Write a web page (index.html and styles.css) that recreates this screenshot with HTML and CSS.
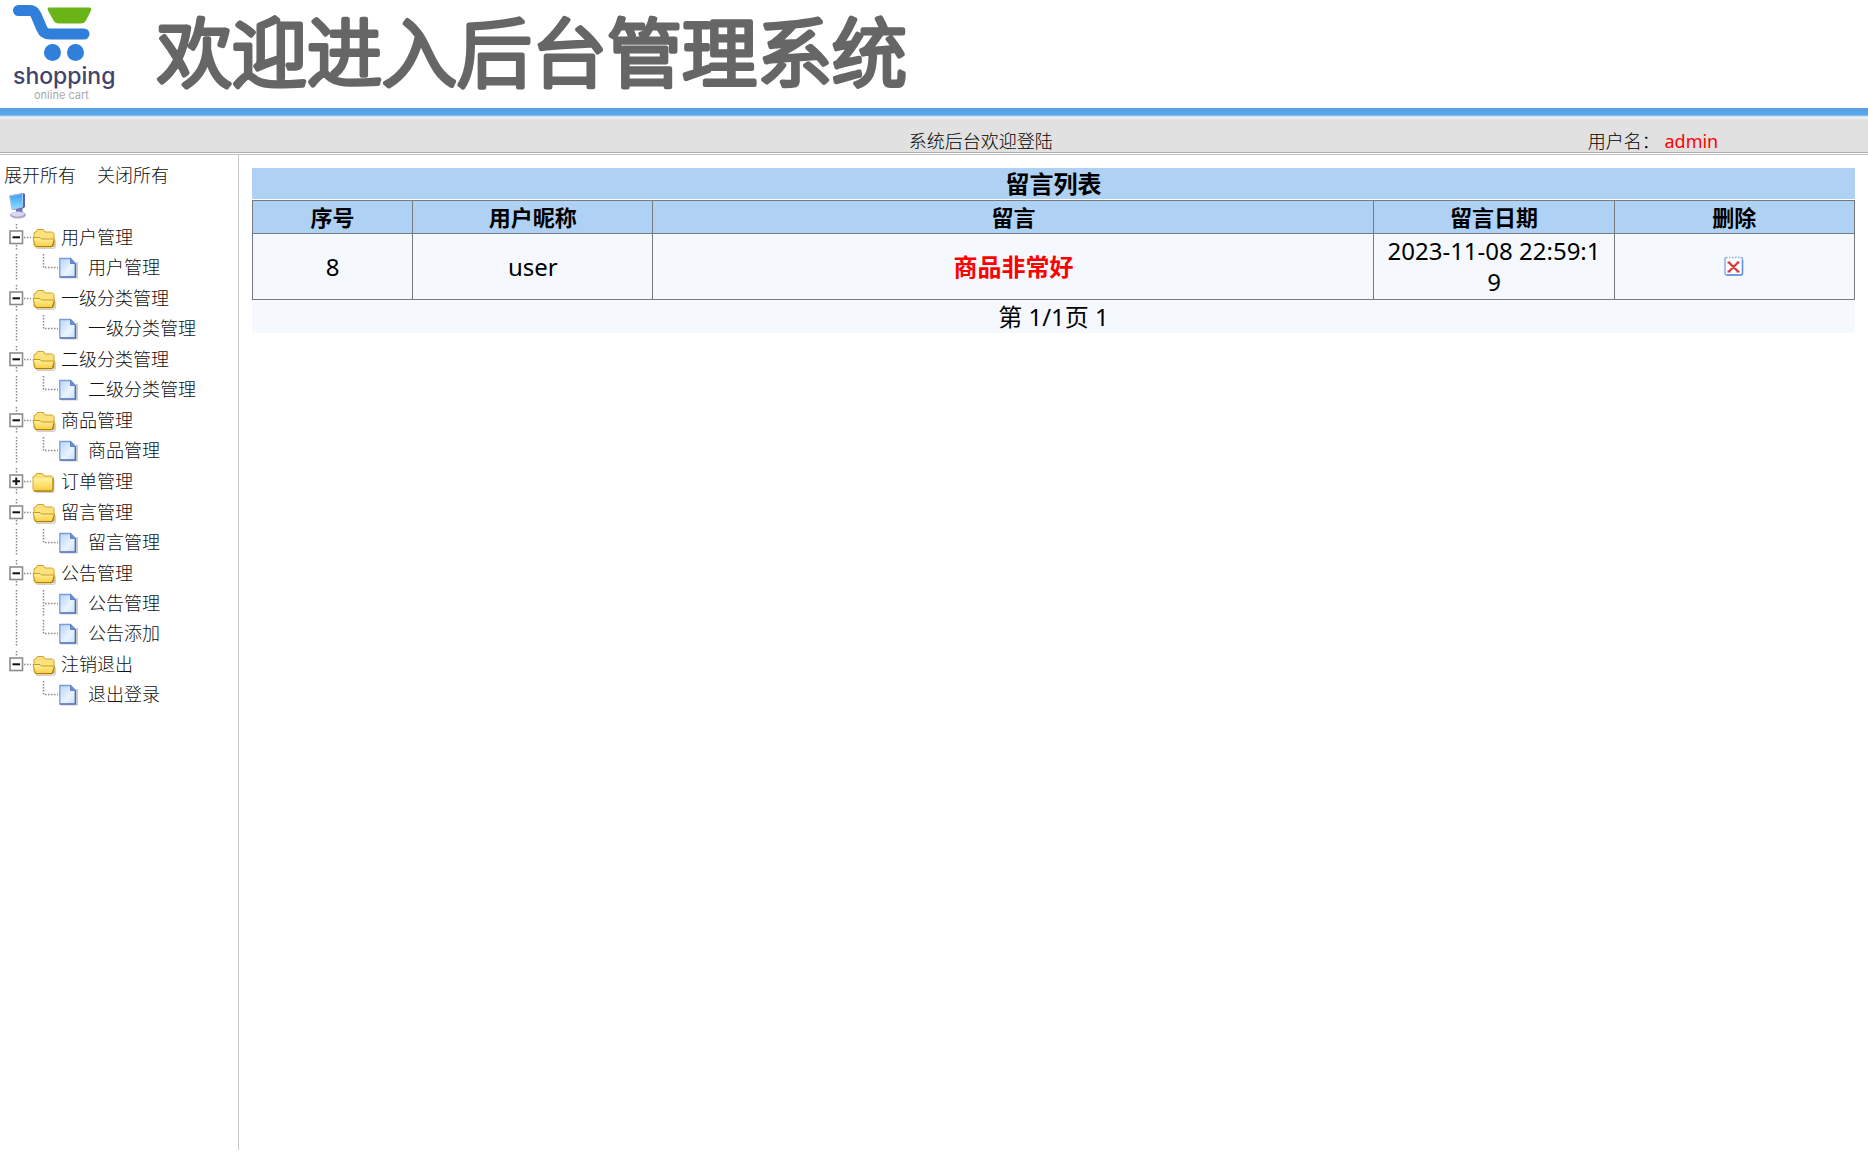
FILE: index.html
```html
<!DOCTYPE html>
<html lang="zh-CN">
<head>
<meta charset="utf-8">
<title>后台管理系统</title>
<link rel="stylesheet" href="styles.css">
</head>
<body>
<svg class="defs" aria-hidden="true">
  <defs>
    <linearGradient id="gold" x1="0" y1="0" x2="0" y2="1"><stop offset="0" stop-color="#fff3a0"/><stop offset="1" stop-color="#f8cf45"/></linearGradient>
    <linearGradient id="paper" x1="0" y1="0" x2="1" y2="1"><stop offset="0" stop-color="#b9d4fa"/><stop offset=".6" stop-color="#eaf4ff"/><stop offset="1" stop-color="#c6ddfb"/></linearGradient>
    <linearGradient id="screen" x1="0" y1="0" x2="0" y2="1"><stop offset="0" stop-color="#3a9cf0"/><stop offset="1" stop-color="#8fe0ff"/></linearGradient>
  </defs>
  <symbol id="line" viewBox="0 0 27 30"><path class="dots" d="M12.5 2v26"/></symbol>
  <symbol id="minus" viewBox="0 0 27 30"><path class="dots" d="M12.5 2v6M12.5 23v6M20 15.5h7"/><rect x="6" y="9" width="12.5" height="12.5" fill="#fff" stroke="#8c8c8c" stroke-width="1.6"/><path d="M8.500 15.300h7.500" stroke="#111" stroke-width="2"/></symbol>
  <symbol id="minus-last" viewBox="0 0 27 30"><path class="dots" d="M12.5 2v6M20 15.500h7"/><rect x="6" y="9" width="12.5" height="12.5" fill="#fff" stroke="#8c8c8c" stroke-width="1.6"/><path d="M8.500 15.300h7.500" stroke="#111" stroke-width="2"/></symbol>
  <symbol id="plus" viewBox="0 0 27 30"><path class="dots" d="M12.5 2v6M12.5 23v6M20 15.500h7"/><rect x="6" y="9" width="12.5" height="12.5" fill="#fff" stroke="#8c8c8c" stroke-width="1.6"/><path d="M8.500 15.300h7.500M12.250 11.500v7.500" stroke="#111" stroke-width="2"/></symbol>
  <symbol id="join" viewBox="0 0 27 30"><path class="dots" d="M12.5 2v26M14 15.500h13"/></symbol>
  <symbol id="join-last" viewBox="0 0 27 30"><path class="dots" d="M12.5 2v14M14 15.500h13"/></symbol>
  <symbol id="open" viewBox="0 0 27 30">
    <path d="M5 26h17l3-9v8l-2 2H6z" fill="#999" opacity=".45"/>
    <path d="M3 23V11l1-1h1l1.500-2.500h6L14 10h7.500l1.500 1.500V23l-2 2H5z" fill="#fbe27c" stroke="#d0a22c"/>
    <path d="M2 15.500h7l1.500 1.500h13l-2 7.500H4.500z" fill="url(#gold)" stroke="#c99a20" stroke-linejoin="round"/>
    <path d="M4.500 24.500h17l1.500-6" fill="none" stroke="#b07f10" stroke-width="1.200"/>
  </symbol>
  <symbol id="closed" viewBox="0 0 27 30">
    <path d="M4 25h18.500V13l1 1v12l-1 1H5z" fill="#999" opacity=".45"/>
    <path d="M2 23V11l1-1h1l1.500-2.500h6L13 10h7.500l1.500 1.500V24l-1 1H3z" fill="#fbe27c" stroke="#d0a22c"/>
    <path d="M2.500 12.500h19V24l-1 .5h-17z" fill="url(#gold)"/>
    <path d="M3 25h18l1-1.500V12" fill="none" stroke="#b8850d" stroke-width="1.300"/>
  </symbol>
  <symbol id="page" viewBox="0 0 27 30">
    <path d="M3 25.500h16V10" fill="none" stroke="#999" stroke-width="2" opacity=".5"/>
    <path d="M1.800 6.500h10.700l5 5V25H1.800z" fill="url(#paper)" stroke="#7a9ddb" stroke-width="1.300"/>
    <path d="M17.300 12v13H2" fill="none" stroke="#4c66ae" stroke-width="1.200"/>
    <path d="M12.500 6.500v5h5z" fill="#6f90d6" stroke="#5f80cb"/>
  </symbol>
</svg>

<header class="banner">
  <svg class="logo" viewBox="0 0 120 108" role="img" aria-label="shopping online cart">
    <path d="M18.500 10.500H30Q34 10.500 36 15l6 14q2 5 8 5h34" fill="none" stroke="#2f7fdb" stroke-width="11" stroke-linecap="round" stroke-linejoin="round"/>
    <path d="M49 7.500h40q3 0 2 3l-5 10q-1.500 3-5 3H59q-4 0-5.500-3l-5.500-10q-1-3 1-3z" fill="#6ab417"/>
    <circle cx="52.500" cy="52.500" r="8.500" fill="#2f7fdb"/><circle cx="75.500" cy="52.500" r="8.500" fill="#2f7fdb"/>
    <text class="logo-name" x="13" y="84">shopping</text>
    <text class="logo-sub" x="34" y="99">online cart</text>
  </svg>
  <h1 class="site-title"><svg viewBox="0 0 760 108"><text x="1" y="81">欢迎进入后台管理系统</text></svg></h1>
</header>

<div class="status">
  <span class="welcome">系统后台欢迎登陆</span>
  <span class="user">用户名： <span class="user-name">admin</span></span>
</div>

<div class="layout">
  <nav class="sidebar">
    <div class="actions"><a href="#">展开所有</a><a href="#">关闭所有</a></div>
    <svg class="computer" viewBox="0 0 27 30" aria-hidden="true">
      <ellipse cx="14" cy="24" rx="8" ry="3.500" fill="#a9a9c9"/>
      <path d="M12 17l6-1 1 7-7 1z" fill="#7476b0"/>
      <ellipse cx="13.500" cy="23" rx="6.500" ry="2.500" fill="#d9d9ee"/>
      <path d="M6 4.500L19 2l2 1v13l-2 1.500L8 19z" fill="#5066b5"/>
      <path d="M5.500 5L18.500 2.500v13.500L8 18.500z" fill="url(#screen)" stroke="#a9c4ea"/>
    </svg>
    <ul class="tree">
      <li><a class="row folder" href="#"><svg><use href="#minus"/></svg><svg><use href="#open"/></svg><span>用户管理</span></a>
        <ul><li><a class="row" href="#"><svg><use href="#line"/></svg><svg><use href="#join-last"/></svg><svg><use href="#page"/></svg><span>用户管理</span></a></li></ul></li>
      <li><a class="row folder" href="#"><svg><use href="#minus"/></svg><svg><use href="#open"/></svg><span>一级分类管理</span></a>
        <ul><li><a class="row" href="#"><svg><use href="#line"/></svg><svg><use href="#join-last"/></svg><svg><use href="#page"/></svg><span>一级分类管理</span></a></li></ul></li>
      <li><a class="row folder" href="#"><svg><use href="#minus"/></svg><svg><use href="#open"/></svg><span>二级分类管理</span></a>
        <ul><li><a class="row" href="#"><svg><use href="#line"/></svg><svg><use href="#join-last"/></svg><svg><use href="#page"/></svg><span>二级分类管理</span></a></li></ul></li>
      <li><a class="row folder" href="#"><svg><use href="#minus"/></svg><svg><use href="#open"/></svg><span>商品管理</span></a>
        <ul><li><a class="row" href="#"><svg><use href="#line"/></svg><svg><use href="#join-last"/></svg><svg><use href="#page"/></svg><span>商品管理</span></a></li></ul></li>
      <li><a class="row folder" href="#"><svg><use href="#plus"/></svg><svg><use href="#closed"/></svg><span>订单管理</span></a></li>
      <li><a class="row folder" href="#"><svg><use href="#minus"/></svg><svg><use href="#open"/></svg><span>留言管理</span></a>
        <ul><li><a class="row" href="#"><svg><use href="#line"/></svg><svg><use href="#join-last"/></svg><svg><use href="#page"/></svg><span>留言管理</span></a></li></ul></li>
      <li><a class="row folder" href="#"><svg><use href="#minus"/></svg><svg><use href="#open"/></svg><span>公告管理</span></a>
        <ul>
          <li><a class="row" href="#"><svg><use href="#line"/></svg><svg><use href="#join"/></svg><svg><use href="#page"/></svg><span>公告管理</span></a></li>
          <li><a class="row" href="#"><svg><use href="#line"/></svg><svg><use href="#join-last"/></svg><svg><use href="#page"/></svg><span>公告添加</span></a></li>
        </ul></li>
      <li><a class="row folder" href="#"><svg><use href="#minus-last"/></svg><svg><use href="#open"/></svg><span>注销退出</span></a>
        <ul><li><a class="row" href="#"><svg></svg><svg><use href="#join-last"/></svg><svg><use href="#page"/></svg><span>退出登录</span></a></li></ul></li>
    </ul>
  </nav>

  <main class="content">
    <h2 class="panel-title">留言列表</h2>
    <table class="messages">
      <colgroup><col class="c-id"><col class="c-mid"><col class="c-text"><col class="c-mid"><col class="c-mid"></colgroup>
      <thead>
        <tr><th>序号</th><th>用户昵称</th><th>留言</th><th>留言日期</th><th>删除</th></tr>
      </thead>
      <tbody>
        <tr>
          <td>8</td>
          <td>user</td>
          <td class="message">商品非常好</td>
          <td>2023-11-08 22:59:19</td>
          <td><button class="delete" type="button" aria-label="删除"><svg viewBox="0 0 20 20"><rect x="1" y="1.500" width="17.500" height="17.500" rx="1.500" fill="#fff" stroke="#8db0ea" stroke-width="1.500"/><path d="M2.500 19h14.500l1.500-1.500V4" fill="none" stroke="#5f8fe0" stroke-width="1.300"/><path d="M3.500 1.500h13" stroke="#fff" stroke-width="2.500" stroke-dasharray="1.500 1.500"/><path d="M3.500 6.500h3M12.500 6.500h3M3.500 15.500h3M12.500 15.500h3M5 6.500l9 9M14 6.500l-9 9" fill="none" stroke="#dc3535" stroke-width="2.200"/></svg></button></td>
        </tr>
      </tbody>
    </table>
    <div class="pager">第 1/1页 1</div>
  </main>
</div>
</body>
</html>
```
FILE: styles.css
```css
* { box-sizing: border-box; }

body {
  margin: 0;
  background: #fff;
  color: #000;
  font: 18px/24px "Noto Sans", "Noto Sans CJK SC", sans-serif;
}

a { color: #111; text-decoration: none; }
ul { margin: 0; padding: 0; list-style: none; }
.defs { position: absolute; width: 0; height: 0; }
.dots { fill: none; stroke: #8a8a8a; stroke-width: 1.5; stroke-dasharray: 1.5 1.5; }

.banner { display: flex; align-items: flex-start; height: 108px; }
.logo { flex: none; width: 120px; height: 108px; }
.logo-name { font: 500 23px Inter, sans-serif; fill: #42456b; }
.logo-sub { font: 11px Inter, sans-serif; fill: #a9a9ad; }

.site-title { margin: 0 0 0 36px; }
.site-title svg { display: block; width: 760px; height: 108px; overflow: visible; }
.site-title text {
  font: 300 75px "Noto Sans CJK SC", sans-serif;
  fill: #666;
  stroke: #666;
  stroke-width: 5px;
  stroke-linejoin: round;
}

.status {
  display: grid;
  grid-template-columns: 20% 65% 1fr;
  height: 47px;
  padding-top: 21px;
  border-bottom: 1px solid #c4c4c4;
  background: linear-gradient(#5a9fdc, #57a8ee 7px, #a9d3f5 8px, #f1f1f1 9px, #e9e9e9 11px, #e1e1e1 12px, #e1e1e1 44px, #b0b0b0 44px, #b0b0b0 45px, #fff 45px);
  font-weight: 300;
}
.welcome { grid-column: 2; text-align: center; }
.user { grid-column: 3; white-space: nowrap; }
.user-name { color: #f00; font-weight: 400; }

.layout { display: flex; min-height: calc(100vh - 165px); }
.sidebar {
  flex: none;
  width: 239px;
  padding: 7px 0 0 4px;
  border-right: 1px solid #c8c8c8;
  font-weight: 300;
}
.actions { display: flex; gap: 21px; line-height: 26px; }
.computer { display: block; width: 27px; height: 30px; margin: 3px 0 0; }
.row { display: flex; align-items: center; height: 30px; }
.folder { height: 31px; }
.row svg { flex: none; width: 27px; height: 30px; }
.row span { margin-left: 3px; white-space: nowrap; }

.content { flex: 1; min-width: 0; padding: 13px 13px 0; text-align: center; }
.panel-title {
  margin: 0 0 1px;
  background: #afd1f3;
  font-size: 24px;
  line-height: 31px;
}
.messages {
  width: 100%;
  border-collapse: collapse;
  table-layout: fixed;
  background: #f5f9fe;
}
.c-id { width: 10%; }
.c-mid { width: 15%; }
.c-text { width: 45%; }
.messages th, .messages td { border: 1px solid #777b80; }
.messages th {
  padding: 1px 8px;
  background: #afd1f3;
  font-size: 22px;
  line-height: 30px;
}
.messages td {
  padding: 1px 8px 2px;
  font-size: 24px;
  line-height: 31px;
  word-break: break-all;
}
.messages .message { color: #f00; font-weight: 700; }
.delete { display: block; margin: 0 auto; padding: 0; border: 0; background: none; }
.delete svg { display: block; width: 20px; height: 20px; }
.pager { background: #f5f9fe; font-size: 24px; line-height: 33px; }
```
